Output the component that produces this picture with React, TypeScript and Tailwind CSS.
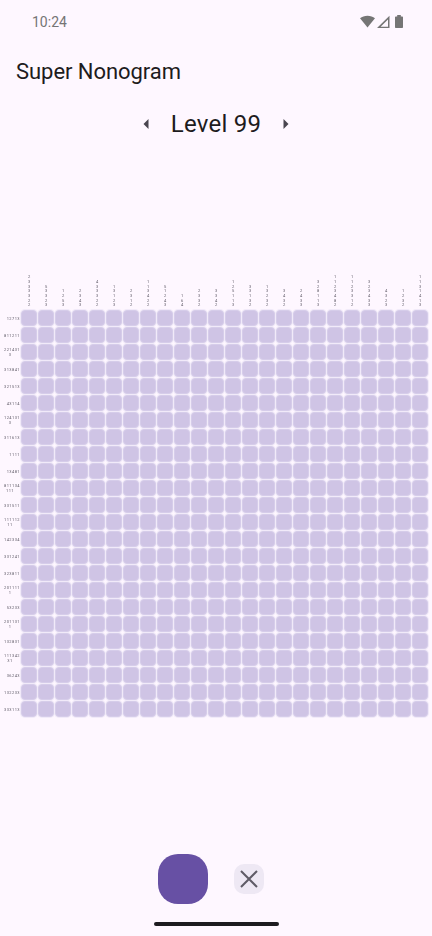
const rowClues = [
  ["12713"], ["811211"], ["221431", "3"], ["313841"], ["321513"], ["43114"], ["124131", "3"], ["311613"],
  ["1111"], ["13481"], ["811134", "111"], ["331511"], ["111112", "11"], ["142334"], ["331241"], ["323811"],
  ["201111", "1"], ["53233"], ["201131", "1"], ["132831"], ["111342", "31"], ["36243"], ["132233"], ["333113"],
];

const colClues = [
  "2333322", "53323", "1253", "2343", "433322", "13123", "2312",
  "113422", "51243", "164", "2332", "3342", "125113", "33132", "13232", "3432",
  "2433", "328113", "1123482", "1123312", "323433", "4323", "1232", "1131413",
];

function StatusIcons() {
  return (
    <svg width="48" height="16" viewBox="0 0 48 16" fill="#757575">
      <path d="M1 4.2C3 2.6 5.6 1.7 8.5 1.7s5.500.9 7.500 2.500L8.500 13.500z" />
      <path fillRule="evenodd" d="M30.500 1.800V14H18zM29 5.400 21.600 12.700H29z" />
      <path d="M36 3.500c0-.6.400-1 1-1h1.200V1h3.600v1.500H43c.6 0 1 .4 1 1V13c0 .6-.400 1-1 1h-6c-.6 0-1-.4-1-1z" />
    </svg>
  );
}

function Arrow({ dir }: { dir: "left" | "right" }) {
  return (
    <svg width="6" height="12" viewBox="0 0 6 12" fill="#49454f">
      <path d={dir === "left" ? "M5.500 1v10L.5 6z" : "M.5 1v10l5-5z"} />
    </svg>
  );
}

export default function App() {
  return (
    <div className="flex h-[936px] w-[432px] flex-col overflow-hidden bg-[#fef7ff] font-['Roboto',sans-serif] text-[#1d1b20]">
      <div className="flex h-[44px] shrink-0 items-center justify-between pl-[32px] pr-[25px] text-[14px] text-[#757575]">
        <span>10:24</span>
        <StatusIcons />
      </div>
      <h1 className="mt-[10px] h-[36px] pl-[16px] text-[22px] leading-[36px] tracking-[-0.05px]">Super Nonogram</h1>
      <div className="mt-[18px] flex h-[32px] items-center justify-center">
        <Arrow dir="left" />
        <span className="mx-[22px] text-[24px] leading-[32px] tracking-[0.25px]">Level 99</span>
        <Arrow dir="right" />
      </div>
      <div className="mt-[133px] grid transform-gpu grid-cols-[20px_repeat(24,16px)] gap-[1px]">
        <div />
        {colClues.map((clue, i) => (
          <div key={i} className="flex h-[36px] flex-col items-center justify-end pb-[1px] text-[4px] leading-[4.670px] text-[#605c68]">
            {clue.split("").map((digit, j) => (
              <span key={j}>{digit}</span>
            ))}
          </div>
        ))}
        {rowClues.map((clue, r) => (
          <Row key={r} clue={clue} />
        ))}
      </div>
      <div className="mt-[137px] flex items-center pl-[158px]">
        <button className="h-[50px] w-[50px] rounded-[20px] bg-[#6750a4]" />
        <button className="ml-[26px] flex h-[30px] w-[30px] items-center justify-center rounded-[10px] bg-[#eee8f4]">
          <svg width="20" height="20" viewBox="0 0 20 20" stroke="#5f5b66" strokeWidth="2" fill="none">
            <path d="M2 2l16 16M18 2 2 18" />
          </svg>
        </button>
      </div>
      <div className="mt-[18px] h-[4px] w-[125px] self-center rounded-full bg-[#1d1b20]" />
    </div>
  );
}

function Row({ clue }: { clue: string[] }) {
  return (
    <>
      <div className="flex h-[16px] flex-col items-end justify-center text-right text-[4px] leading-[5px] tracking-[0.42px] text-[#605c68]">
        {clue.map((line, i) => (
          <span key={i} className={i > 0 ? "self-center" : ""}>{line}</span>
        ))}
      </div>
      {Array.from({ length: 24 }, (_, c) => (
        <div key={c} className="h-[16px] rounded-[4px] border border-[#d6cdea] bg-[#cfc4e5] shadow-[0_0_0_1px_#f1eaf9]" />
      ))}
    </>
  );
}
